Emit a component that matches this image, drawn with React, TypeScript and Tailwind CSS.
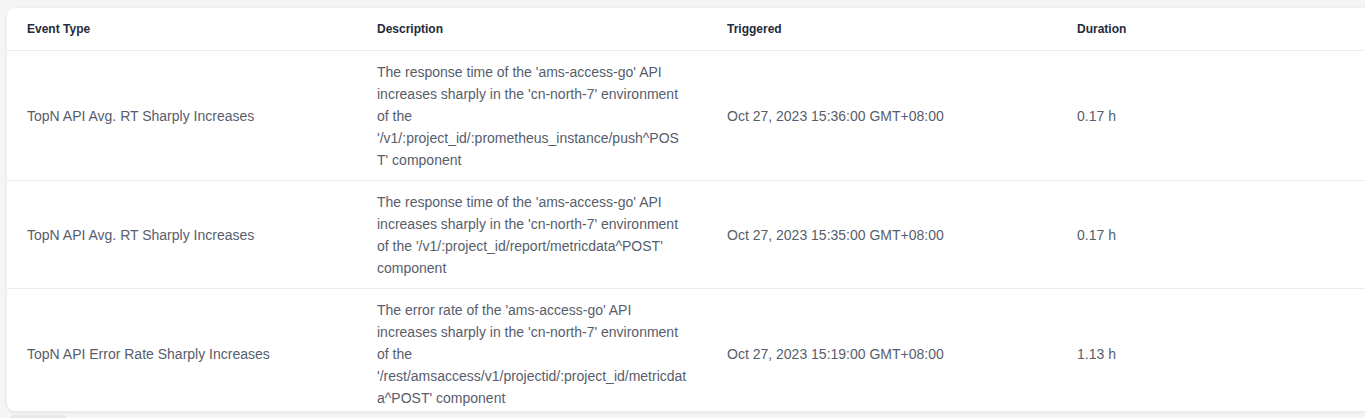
const rows = [
  {
    type: 'TopN API Avg. RT Sharply Increases',
    desc: "The response time of the 'ams-access-go' API increases sharply in the 'cn-north-7' environment of the '/v1/:project_id/:prometheus_instance/push^POST' component",
    triggered: 'Oct 27, 2023 15:36:00 GMT+08:00',
    duration: '0.17 h',
  },
  {
    type: 'TopN API Avg. RT Sharply Increases',
    desc: "The response time of the 'ams-access-go' API increases sharply in the 'cn-north-7' environment of the '/v1/:project_id/report/metricdata^POST' component",
    triggered: 'Oct 27, 2023 15:35:00 GMT+08:00',
    duration: '0.17 h',
  },
  {
    type: 'TopN API Error Rate Sharply Increases',
    desc: "The error rate of the 'ams-access-go' API increases sharply in the 'cn-north-7' environment of the '/rest/amsaccess/v1/projectid/:project_id/metricdata^POST' component",
    triggered: 'Oct 27, 2023 15:19:00 GMT+08:00',
    duration: '1.13 h',
  },
];

export default function App() {
  return (
    <div
      className="h-[418px] w-full overflow-hidden bg-[#f5f5f6] pt-[8px] pl-[7px]"
      style={{ fontFamily: '"Liberation Sans", Arial, sans-serif' }}
    >
      <div className="h-[403px] w-[1400px] overflow-hidden rounded-lg bg-white shadow-[0_1px_4px_rgba(0,0,0,0.08)]">
        <table className="w-full table-fixed border-collapse">
          <colgroup>
            <col className="w-[350px]" />
            <col className="w-[350px]" />
            <col className="w-[350px]" />
            <col className="w-[350px]" />
          </colgroup>
          <thead>
            <tr className="h-[42px] border-b border-[#ebebf2]">
              {['Event Type', 'Description', 'Triggered', 'Duration'].map((h) => (
                <th key={h} className="px-5 text-left text-xs font-semibold text-[#252b3a]">
                  {h}
                </th>
              ))}
            </tr>
          </thead>
          <tbody>
            {rows.map((r, i) => (
              <tr key={i} className="border-b border-[#ebebf2] text-sm leading-[22px] text-[#575d6c]">
                <td className="px-5 pt-[10px] pb-[9px] align-middle">{r.type}</td>
                <td className="px-5 pt-[10px] pb-[9px] align-middle break-words">{r.desc}</td>
                <td className="px-5 pt-[10px] pb-[9px] align-middle">{r.triggered}</td>
                <td className="px-5 pt-[10px] pb-[9px] align-middle">{r.duration}</td>
              </tr>
            ))}
          </tbody>
        </table>
      </div>
      <div className="mt-[4px] ml-[3px] h-[8px] w-[57px] rounded-t bg-[#e8e8ea]" />
    </div>
  );
}
